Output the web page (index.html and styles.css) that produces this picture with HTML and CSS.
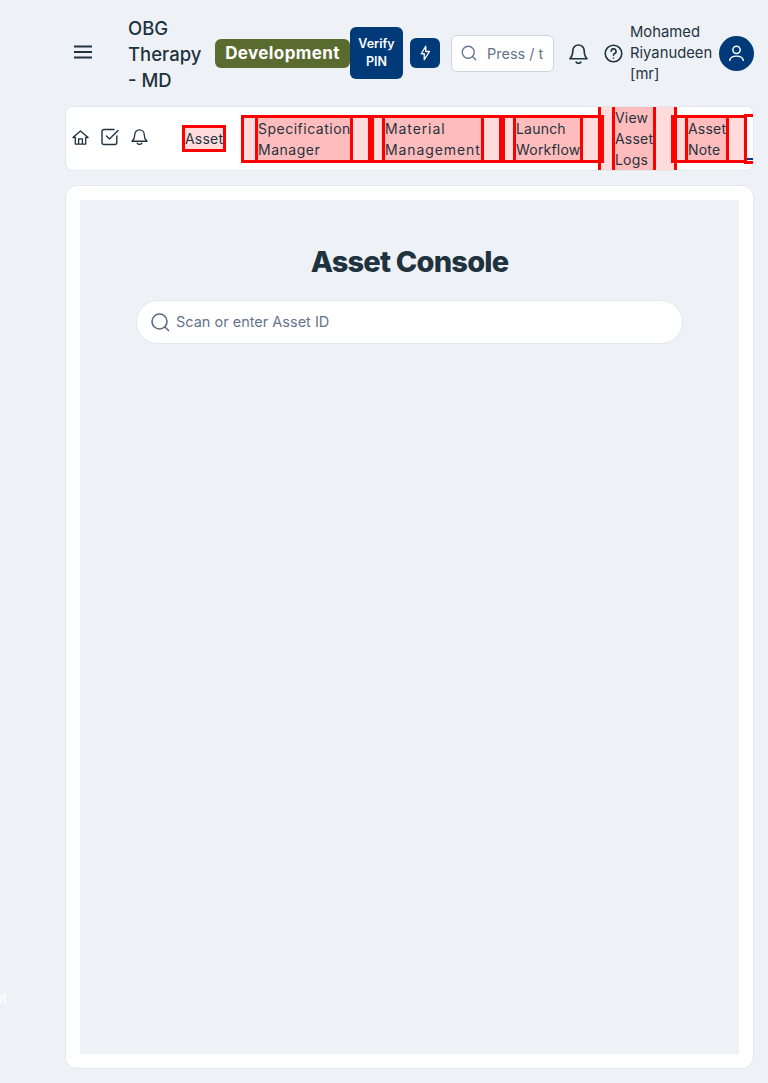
FILE: index.html
```html
<!DOCTYPE html>
<html lang="en">

<head>
    <meta charset="UTF-8">
    <meta name="viewport" content="width=device-width, initial-scale=1.0">
    <title>Asset Console</title>
    <link rel="stylesheet" href="styles.css">
</head>

<body>
    <div class="sidebar-peek">Logout</div>

    <header class="topbar">
        <svg class="icon-menu" viewBox="0 0 18 14" width="18" height="14" fill="none" stroke="#1f333f" stroke-width="1.800">
            <path d="M0 1.500h18M0 7h18M0 12.500h18" />
        </svg>
        <div class="app-title">OBG Therapy - MD</div>
        <div class="env-badge">Development</div>
        <button class="btn-verify">Verify PIN</button>
        <button class="btn-bolt">
            <svg viewBox="0 0 24 24" width="18" height="18" fill="none" stroke="#fff" stroke-width="1.800" stroke-linejoin="round" stroke-linecap="round">
                <path d="M13 3v7h5l-7 11v-8H7l6-10z" />
            </svg>
        </button>
        <div class="top-search">
            <svg viewBox="0 0 24 24" width="18" height="18" fill="none" stroke="#64748b" stroke-width="1.700" stroke-linecap="round">
                <circle cx="11" cy="11" r="8" />
                <path d="M17 17l4 4" />
            </svg>
            <span>Press / t</span>
        </div>
        <svg class="icon-bell" viewBox="0 0 20 22" width="19" height="21" fill="none" stroke="#1f333f" stroke-width="1.700" stroke-linecap="round" stroke-linejoin="round">
            <path d="M10 2a6 6 0 0 0-6 6c0 5-2 7.500-3 8.500h18c-1-1-3-3.500-3-8.500a6 6 0 0 0-6-6z" />
            <path d="M7.500 20a3 3 0 0 0 5 0" />
        </svg>
        <svg class="icon-help" viewBox="0 0 20 20" width="19" height="19" fill="none" stroke="#1f333f" stroke-width="1.700" stroke-linecap="round">
            <circle cx="10" cy="10" r="8.700" />
            <path d="M7.500 7.700a2.600 2.600 0 1 1 3.700 2.400c-.8.400-1.200.9-1.200 1.700" />
            <path d="M10 14.700v.1" />
        </svg>
        <div class="user-name">Mohamed Riyanudeen [mr]</div>
        <div class="avatar">
            <svg viewBox="0 0 20 20" width="21" height="21" fill="none" stroke="#fff" stroke-width="1.400" stroke-linecap="round">
                <circle cx="10" cy="6.500" r="3.500" />
                <path d="M3.500 16.500c.5-3 3-4 6.500-4s6 1 6.500 4" />
            </svg>
        </div>
    </header>

    <nav class="tabbar">
        <div class="quick-icons">
            <svg viewBox="0 0 18 18" width="17" height="17" fill="none" stroke="#1f333f" stroke-width="1.400" stroke-linejoin="round">
                <path d="M1 9l8-7 8 7h-2.500v7h-11V9z" />
                <path d="M7 16v-5.500h4V16" />
            </svg>
            <svg viewBox="0 0 18 18" width="18" height="18" fill="none" stroke="#1f333f" stroke-width="1.400" stroke-linecap="round" stroke-linejoin="round">
                <path d="M15.800 8v6.500a2 2 0 0 1-2 2H3a2 2 0 0 1-2-2V3.500a2 2 0 0 1 2-2h10" />
                <path d="M5.500 8l3 3 8.500-8.500" />
            </svg>
            <svg viewBox="0 0 18 18" width="17" height="18" fill="none" stroke="#1f333f" stroke-width="1.400" stroke-linecap="round" stroke-linejoin="round">
                <path d="M9 1.500a5 5 0 0 0-5 5c0 4.500-2 6-3 7h16c-1-1-3-2.500-3-7a5 5 0 0 0-5-5z" />
                <path d="M6.500 15.500a3 3 0 0 0 5 0" />
            </svg>
        </div>
        <a class="tab-plain">Asset</a>
        <div class="tabs">
            <a class="tab"><span class="tab-text w92">Specification Manager</span></a>
            <a class="tab"><span class="tab-text w96">Material Management</span></a>
            <a class="tab"><span class="tab-text w64">Launch Workflow</span></a>
            <a class="tab"><span class="tab-text w38">View Asset Logs</span></a>
            <a class="tab"><span class="tab-text w38">Asset Note</span></a>
            <a class="tab-last"><span class="tab-mark"></span></a>
        </div>
    </nav>

    <main class="card">
        <section class="console">
            <h1>Asset Console</h1>
            <div class="scan-box">
                <svg viewBox="0 0 20 20" width="20" height="20" fill="none" stroke="#5b6b85" stroke-width="1.600" stroke-linecap="round">
                    <circle cx="9.500" cy="9.500" r="7.500" />
                    <path d="M15 15l3.500 3.500" />
                </svg>
                <span class="scan-hint">Scan or enter Asset ID</span>
            </div>
        </section>
    </main>
</body>

</html>
```

FILE: styles.css
```css
* {
    box-sizing: border-box;
}

html,
body {
    height: 100%;
}

body {
    position: relative;
    margin: 0;
    overflow: hidden;
    background-color: #eef2f7;
    color: #1f333f;
    font-family: Inter, "Open Sans", sans-serif;
}

.sidebar-peek {
    position: absolute;
    left: -43px;
    top: 990px;
    width: 50px;
    color: #fff;
    font-size: 13px;
    text-align: right;
}

.topbar {
    display: flex;
    align-items: center;
    height: 106px;
    padding-left: 74px;
}

.icon-menu {
    margin: -2px 36px 0 0;
}

.app-title {
    width: 74px;
    margin-right: 13px;
    padding-top: 1px;
    font-size: 18.5px;
    font-weight: 500;
    line-height: 26px;
}

.env-badge {
    width: 135px;
    height: 29px;
    background-color: #5a6b2f;
    border-radius: 6px;
    color: #fff;
    font-size: 17px;
    font-weight: 700;
    line-height: 29px;
    text-align: center;
    letter-spacing: 0.4px;
}

.btn-verify {
    width: 53px;
    height: 52px;
    padding: 0 6px;
    border: none;
    border-radius: 6px;
    background-color: #003a78;
    color: #fff;
    font-family: inherit;
    font-size: 12.5px;
    font-weight: 600;
    line-height: 18px;
}

.btn-bolt {
    display: flex;
    align-items: center;
    justify-content: center;
    width: 30px;
    height: 30px;
    margin: 0 11px 0 7px;
    padding: 0;
    border: none;
    border-radius: 6px;
    background-color: #003a78;
}

.top-search {
    display: flex;
    align-items: center;
    gap: 9px;
    width: 103px;
    height: 37px;
    padding-left: 8px;
    background-color: #fff;
    border: 1px solid #cbd5e1;
    border-radius: 6px;
    color: #64748b;
    font-size: 14.5px;
    white-space: nowrap;
}

.icon-bell {
    margin: 0 16px 0 15px;
}

.icon-help {
    margin-right: 7px;
}

.user-name {
    width: 89px;
    font-size: 14.8px;
    line-height: 21px;
}

.avatar {
    display: flex;
    align-items: center;
    justify-content: center;
    width: 35px;
    height: 35px;
    border-radius: 50%;
    background-color: #003a78;
}

.tabbar {
    display: flex;
    align-items: center;
    height: 65px;
    margin: 0 14px 0 65px;
    padding-left: 7px;
    overflow: hidden;
    background-color: #fff;
    border: 1px solid #e2e8f0;
    border-radius: 8px;
    font-size: 14px;
    line-height: 21px;
}

.quick-icons {
    display: flex;
    align-items: center;
    gap: 12px;
    width: 110px;
    margin: -3px 0 0 -1px;
    flex-shrink: 0;
}

.tab-plain {
    flex-shrink: 0;
    width: 44px;
    margin-right: 15px;
    border: 3px solid #f00;
    background-color: #ffdcdc;
    letter-spacing: 0.2px;
}

.tabs {
    display: flex;
    align-items: center;
}

.tab {
    flex-shrink: 0;
    padding: 0 18px 0 11px;
    border: 3px solid #f00;
    background-color: rgba(255, 0, 0, 0.14);
}

.tab + .tab {
    margin-left: -6px;
}

.tab-text {
    display: block;
    box-sizing: content-box;
    background-color: rgba(255, 0, 0, 0.14);
    border-left: 3px solid #f00;
    border-right: 3px solid #f00;
}

.tab-last {
    display: flex;
    flex-direction: column;
    justify-content: flex-end;
    flex-shrink: 0;
    width: 30px;
    height: 50px;
    margin-left: -6px;
    padding-bottom: 1px;
    background-color: #fff;
    border: 3px solid #f00;
}

.tab-mark {
    display: block;
    height: 2px;
    background-color: #003a78;
}

.w92 {
    width: 92px;
    letter-spacing: 0.5px;
}

.w96 {
    width: 96px;
    letter-spacing: 0.9px;
}

.w64 {
    width: 64px;
    letter-spacing: 0.2px;
}

.w38 {
    width: 38px;
    letter-spacing: 0.2px;
}

.card {
    height: 884px;
    margin: 14px 14px 0 65px;
    padding: 14px;
    background-color: #fff;
    border: 1px solid #e2e8f0;
    border-radius: 12px;
}

.console {
    height: 100%;
    padding: 42px 56px 0;
    background-color: #eef2f7;
}

.console h1 {
    margin: 0 0 18px;
    font-size: 29px;
    font-weight: 800;
    line-height: 40px;
    text-align: center;
    letter-spacing: -0.8px;
}

.scan-box {
    display: flex;
    align-items: center;
    gap: 6px;
    height: 44px;
    padding-left: 13px;
    background-color: #fff;
    border: 1px solid #e2e8f0;
    border-radius: 22px;
    color: #64748b;
    font-size: 14.5px;
}

.scan-hint {
    margin-bottom: 2px;
}
```
